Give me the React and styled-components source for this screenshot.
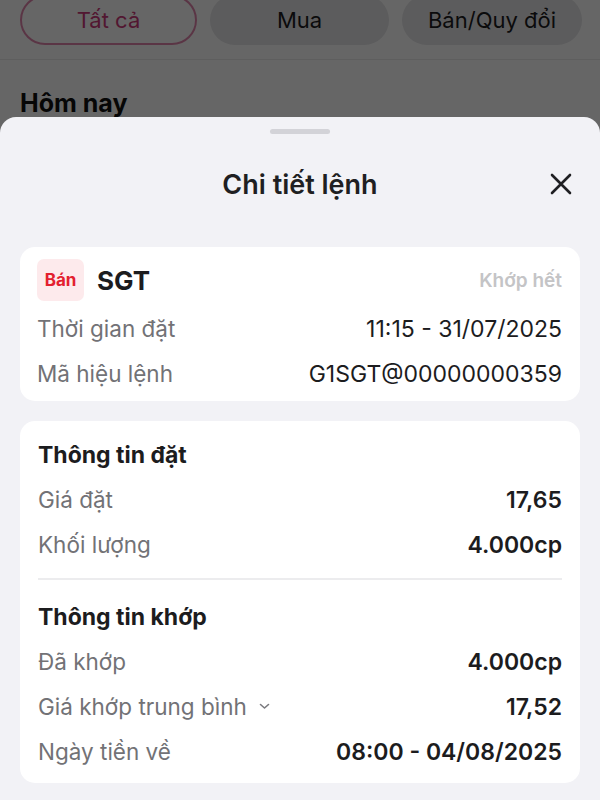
import React from "react";
import styled, { createGlobalStyle } from "styled-components";

const Global = createGlobalStyle`
  html, body { margin: 0; padding: 0; }
  body {
    width: 600px;
    height: 800px;
    overflow: hidden;
    font-family: Inter, "Noto Sans", "Liberation Sans", sans-serif;
    background: #ffffff;
  }
`;

const Page = styled.div`
  position: relative;
  width: 600px;
  height: 800px;
  overflow: hidden;
  background: #ffffff;
`;

const TabBar = styled.div`
  display: flex;
  gap: 13px;
  padding: 0 18px 0 20px;
  margin-top: -5px;
  height: 64px;
  border-bottom: 1px solid #ececec;
`;

const Pill = styled.div`
  flex: 0 0 ${(p) => p.$w}px;
  height: 50px;
  border-radius: 26px;
  display: flex;
  align-items: center;
  justify-content: center;
  font-size: 22px;
  color: ${(p) => (p.$active ? "#cc3a7a" : "#1c1c1e")};
  background: ${(p) => (p.$active ? "#ffffff" : "#e6e6e8")};
  border: 2px solid ${(p) => (p.$active ? "#e286ad" : "transparent")};
  box-sizing: border-box;
`;

const SectionHead = styled.div`
  padding: 28px 20px 0;
  font-size: 25px;
  font-weight: 700;
  color: #111;
`;

const Backdrop = styled.div`
  position: absolute;
  inset: 0;
  background: rgba(0, 0, 0, 0.6);
`;

const Sheet = styled.div`
  position: absolute;
  left: 0;
  right: 0;
  top: 117px;
  bottom: 0;
  background: #f2f2f6;
  border-radius: 16px 16px 0 0;
  display: flex;
  flex-direction: column;
  padding: 0 20px;
`;

const Handle = styled.div`
  align-self: center;
  width: 60px;
  height: 5px;
  border-radius: 3px;
  background: #d3d3d8;
  margin-top: 12px;
`;

const Header = styled.div`
  position: relative;
  height: 100px;
  margin-bottom: 13px;
  display: flex;
  align-items: center;
  justify-content: center;
`;

const Title = styled.div`
  font-size: 27px;
  font-weight: 600;
  color: #1f1f22;
`;

const Close = styled.button`
  position: absolute;
  right: 6px;
  top: 50%;
  transform: translateY(-50%);
  width: 26px;
  height: 26px;
  padding: 0;
  border: 0;
  background: transparent;
  display: flex;
  align-items: center;
  justify-content: center;
`;

const Card = styled.div`
  background: #ffffff;
  border-radius: 15px;
  padding: ${(p) => p.$pad};
  margin-bottom: ${(p) => p.$mb || 0}px;
  display: flex;
  flex-direction: column;
`;

const TopRow = styled.div`
  display: flex;
  align-items: center;
  height: 44px;
  margin-bottom: 4px;
`;

const Badge = styled.div`
  width: 47px;
  height: 42px;
  border-radius: 7px;
  background: #fdeaec;
  color: #e3202f;
  font-size: 17px;
  font-weight: 700;
  display: flex;
  align-items: center;
  justify-content: center;
`;

const Symbol = styled.div`
  margin-left: 13px;
  font-size: 26px;
  font-weight: 700;
  color: #1c1c1e;
`;

const Status = styled.div`
  margin-left: auto;
  font-size: 19px;
  font-weight: 600;
  color: #c4c4c6;
`;

const Row = styled.div`
  display: flex;
  align-items: center;
  justify-content: space-between;
  height: 45px;
`;

const Label = styled.div`
  display: flex;
  align-items: center;
  gap: 12px;
  font-size: 22.5px;
  color: #727276;
`;

const Value = styled.div`
  font-size: 23px;
  font-weight: ${(p) => p.$w || 400};
  color: #1c1c1e;
`;

const GroupTitle = styled.div`
  height: 44px;
  display: flex;
  align-items: center;
  font-size: 23px;
  font-weight: 700;
  color: #1c1c1e;
`;

const Divider = styled.div`
  height: 2px;
  background: #ececee;
  margin: 11px 0 15px;
`;

const Chevron = () => (
  <svg width="11" height="7" viewBox="0 0 11 7" fill="none">
    <path d="M1.5 1.5 L5.5 5 L9.5 1.5" stroke="#7a7a7e" strokeWidth="1.6" strokeLinecap="round" strokeLinejoin="round" />
  </svg>
);

const XIcon = () => (
  <svg width="22" height="22" viewBox="0 0 22 22" fill="none">
    <path d="M2 2 L20 20 M20 2 L2 20" stroke="#1f1f22" strokeWidth="2.6" strokeLinecap="round" />
  </svg>
);

export default function App() {
  return (
    <Page>
      <Global />
      <TabBar>
        <Pill $w={177} $active>Tất cả</Pill>
        <Pill $w={179}>Mua</Pill>
        <Pill $w={180}>Bán/Quy đổi</Pill>
      </TabBar>
      <SectionHead>Hôm nay</SectionHead>
      <Backdrop />
      <Sheet>
        <Handle />
        <Header>
          <Title>Chi tiết lệnh</Title>
          <Close aria-label="Đóng">
            <XIcon />
          </Close>
        </Header>
        <Card $pad="11px 18px 5px 17px" $mb={20}>
          <TopRow>
            <Badge>Bán</Badge>
            <Symbol>SGT</Symbol>
            <Status>Khớp hết</Status>
          </TopRow>
          <Row>
            <Label>Thời gian đặt</Label>
            <Value>11:15 - 31/07/2025</Value>
          </Row>
          <Row>
            <Label>Mã hiệu lệnh</Label>
            <Value>G1SGT@00000000359</Value>
          </Row>
        </Card>
        <Card $pad="12px 18px 9px 18px">
          <GroupTitle>Thông tin đặt</GroupTitle>
          <Row>
            <Label>Giá đặt</Label>
            <Value $w={600}>17,65</Value>
          </Row>
          <Row>
            <Label>Khối lượng</Label>
            <Value $w={600}>4.000cp</Value>
          </Row>
          <Divider />
          <GroupTitle>Thông tin khớp</GroupTitle>
          <Row>
            <Label>Đã khớp</Label>
            <Value $w={600}>4.000cp</Value>
          </Row>
          <Row>
            <Label>
              Giá khớp trung bình <Chevron />
            </Label>
            <Value $w={600}>17,52</Value>
          </Row>
          <Row>
            <Label>Ngày tiền về</Label>
            <Value $w={600}>08:00 - 04/08/2025</Value>
          </Row>
        </Card>
      </Sheet>
    </Page>
  );
}
